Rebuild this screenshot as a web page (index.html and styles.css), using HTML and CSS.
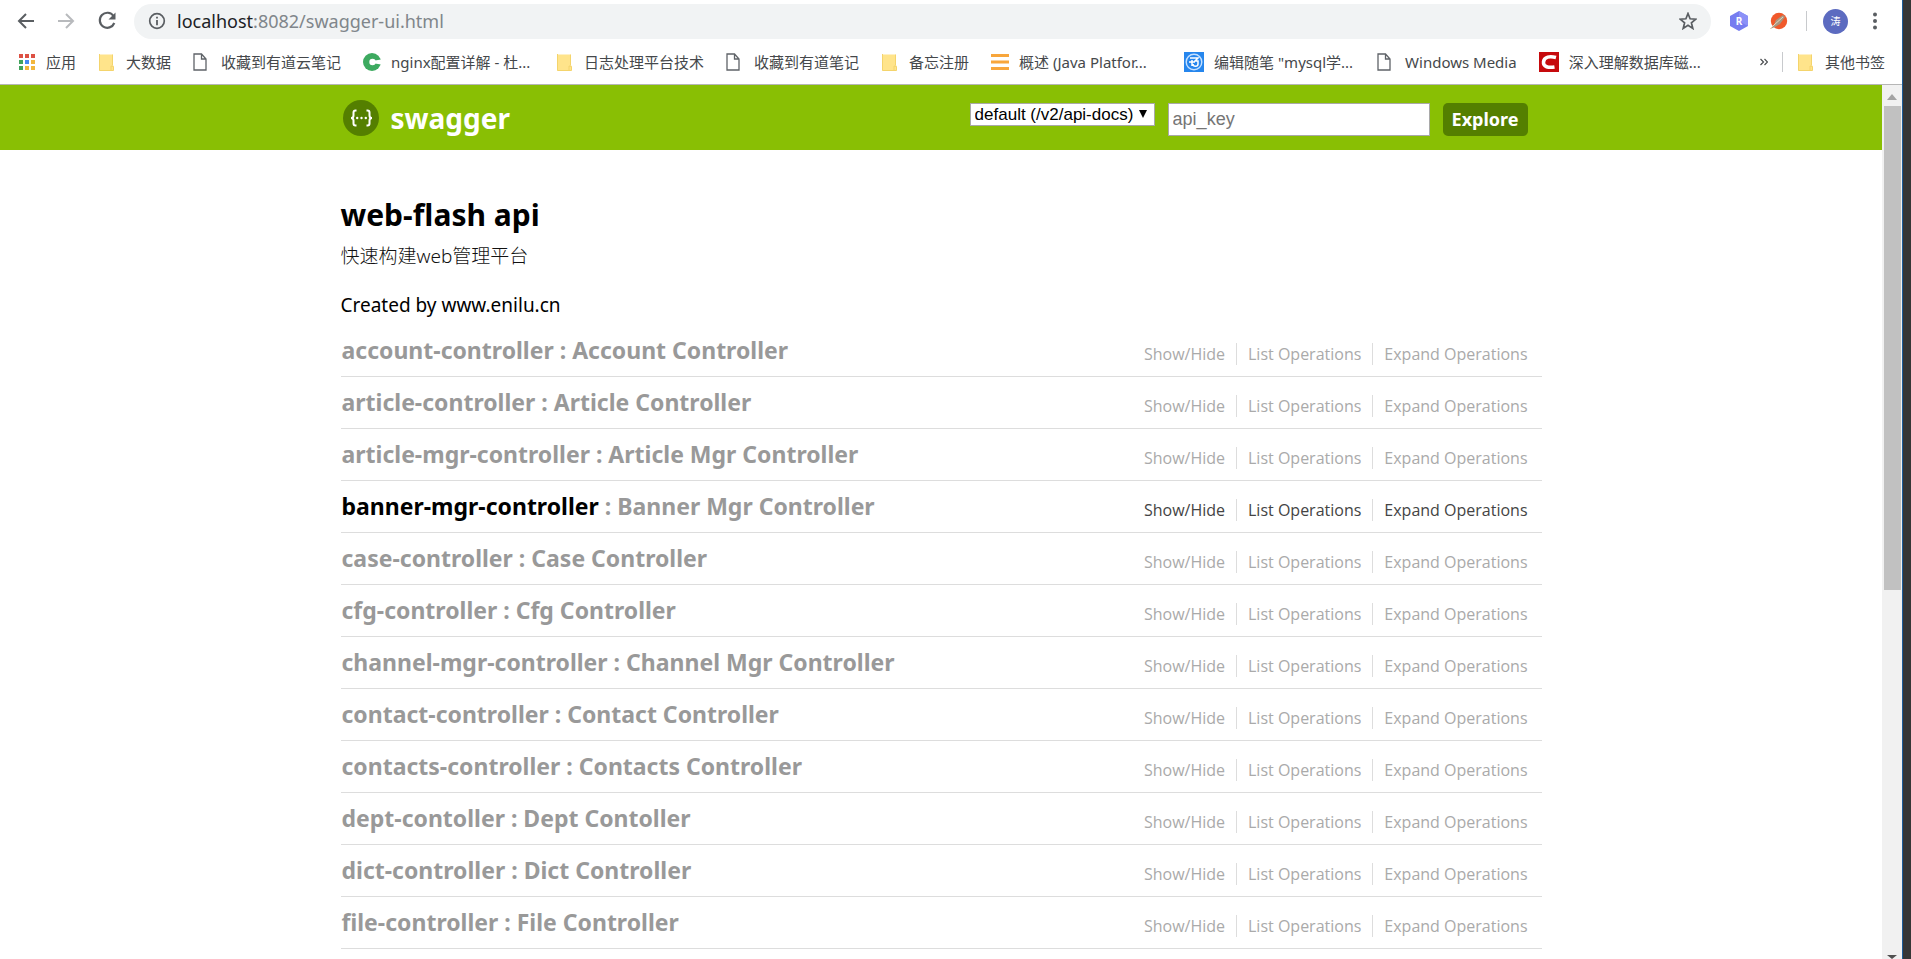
FILE: index.html
```
<!DOCTYPE html>
<html lang="zh-CN">
<head>
<meta charset="utf-8">
<title>Swagger UI</title>
<link rel="stylesheet" href="styles.css">
</head>
<body>
<svg class="defs" width="0" height="0" aria-hidden="true">
  <symbol id="folder" viewBox="0 0 18 18"><path d="M1 1.500h13.500v11h1v5H1z" fill="#ffe48b"/><path d="M1.500 1v16.500h12M14.500 1.500v11M13 13v4.500h2.500v-4z" fill="none" stroke="#f4d46c"/></symbol>
  <symbol id="page" viewBox="0 0 18 18"><path d="M1 1h7.500l4.500 5v11H1zM8.500 1v5H13" fill="#fff" stroke="#5f6368" stroke-width="1.300"/></symbol>
</svg>
<div class="screen">
<div class="browser">
  <div class="toolbar">
    <button class="tool" aria-label="后退"><svg width="18" height="18" viewBox="0 0 18 18"><path d="M17 9H2M9 2L2 9l7 7" fill="none" stroke="#5a5e62" stroke-width="2"/></svg></button>
    <button class="tool" aria-label="前进"><svg width="18" height="18" viewBox="0 0 18 18"><path d="M1 9h15M9 2l7 7-7 7" fill="none" stroke="#b8babd" stroke-width="2"/></svg></button>
    <button class="tool" aria-label="刷新"><svg width="20" height="20" viewBox="0 0 20 20"><path d="M16.500 5A7.500 7.500 0 1 0 17.300 12" fill="none" stroke="#5a5e62" stroke-width="2.200"/><path d="M18.500 1.500v7h-7z" fill="#5a5e62"/></svg></button>
    <div class="address">
      <svg width="18" height="18" viewBox="0 0 18 18"><circle cx="9" cy="9" r="7.300" fill="none" stroke="#5a5e62" stroke-width="1.700"/><path d="M9 4.700v1.900M9 8v5.200" stroke="#5a5e62" stroke-width="1.800"/></svg>
      <span class="url"><b>localhost</b>:8082/swagger-ui.html</span>
      <button class="tool star" aria-label="收藏"><svg width="18" height="18" viewBox="0 0 18 18"><path d="M9 1.500l2.100 5.300 5.700.4-4.400 3.600 1.400 5.600L9 13.300l-4.800 3.100 1.400-5.600L1.200 7.200l5.700-.4z" fill="none" stroke="#5a5e62" stroke-width="1.700"/></svg></button>
    </div>
    <div class="extensions">
      <button class="tool" aria-label="R"><svg width="20" height="20" viewBox="0 0 20 20"><path d="M10 0l9 5v10l-9 5-9-5V5z" fill="#767df0"/><path d="M10 0l9 5v10l-9-5z" fill="#8b91f7"/><text x="10" y="13.500" text-anchor="middle" class="ext-letter">R</text></svg></button>
      <button class="tool" aria-label="Postman"><svg width="20" height="20" viewBox="0 0 20 20"><circle cx="11" cy="10" r="8.200" fill="#f0592b"/><path d="M2 18l4-4 2-5 7-5 2 2-5 7-5 3z" fill="#a99680"/><path d="M6 14l9-8M2 18l5-5" stroke="#e7d5bc"/></svg></button>
      <span class="divider"></span>
      <button class="avatar">涛</button>
      <button class="tool menu" aria-label="菜单"><svg width="6" height="18" viewBox="0 0 6 18"><g fill="#5a5e62"><circle cx="3" cy="2.500" r="2"/><circle cx="3" cy="9" r="2"/><circle cx="3" cy="15.500" r="2"/></g></svg></button>
    </div>
  </div>
  <nav class="bookmarks">
    <a href="#"><svg width="18" height="18" viewBox="0 0 18 18"><path d="M1 1h4v4H1zM7 1h4v4H7zM13 1h4v4h-4z" fill="#dd5144"/><path d="M1 7h4v4H1z" fill="#42a35c"/><path d="M7 7h4v4H7z" fill="#4688f1"/><path d="M13 7h4v4h-4zM7 13h4v4H7zM13 13h4v4h-4z" fill="#f2b63c"/><path d="M1 13h4v4H1z" fill="#42a35c"/></svg>应用</a>
    <a href="#"><svg width="18" height="18"><use href="#folder"/></svg>大数据</a>
    <a href="#"><svg width="18" height="18"><use href="#page"/></svg>收藏到有道云笔记</a>
    <a href="#" class="clipped"><svg width="18" height="18" viewBox="0 0 18 18"><circle cx="9" cy="9" r="9" fill="#3daa60"/><circle cx="9.500" cy="9" r="3.200" fill="#fff"/><path d="M12 7.600l6-1v4.800l-6-1z" fill="#fff"/></svg>nginx配置详解 - 杜...</a>
    <a href="#"><svg width="18" height="18"><use href="#folder"/></svg>日志处理平台技术</a>
    <a href="#"><svg width="18" height="18"><use href="#page"/></svg>收藏到有道笔记</a>
    <a href="#"><svg width="18" height="18"><use href="#folder"/></svg>备忘注册</a>
    <a href="#" class="clipped"><svg width="18" height="18" viewBox="0 0 18 18"><path d="M0 1h18v3H0zM0 7.500h18v3H0zM0 14h18v3H0z" fill="#f8a63c"/></svg>概述 (Java Platfor...</a>
    <a href="#" class="clipped"><svg width="20" height="20" viewBox="0 0 20 20"><path d="M0 0h20v20H0z" fill="#2686ed"/><circle cx="10" cy="10" r="7.800" fill="none" stroke="#c6e1ff" stroke-width="1.400"/><path d="M6 6h8l-3 3h3v3c0 3-5 3-5 0M5 10h6M8 8v6" fill="none" stroke="#fff" stroke-width="1.500"/></svg>编辑随笔 "mysql学...</a>
    <a href="#"><svg width="18" height="18"><use href="#page"/></svg>Windows Media</a>
    <a href="#"><svg width="20" height="20" viewBox="0 0 20 20"><path d="M0 0h20v20H0z" fill="#c60a0d"/><path d="M17 5.500c-6-1.500-12-1-12.500 4.500-.5 5 5 6 11 5" fill="none" stroke="#fff" stroke-width="3.500"/></svg>深入理解数据库磁...</a>
    <div class="overflow">
      <button class="tool" aria-label="更多书签"><svg width="8" height="8" viewBox="0 0 8 8"><path d="M.5 1l3 3-3 3M4.500 1l3 3-3 3" fill="none" stroke="#4a4d50" stroke-width="1.200"/></svg></button>
      <span class="divider"></span>
      <a href="#"><svg width="18" height="18"><use href="#folder"/></svg>其他书签</a>
    </div>
  </nav>
  <div class="viewport">
    <div class="document">
      <header class="topbar">
        <div class="wrap">
          <a class="logo" href="#"><svg width="36" height="36" viewBox="0 0 36 36"><circle cx="18" cy="18" r="18" fill="#547f00"/><g fill="none" stroke="#fff" stroke-width="2"><path d="M13.500 10.500h-1q-2 0-2 2v3q0 2.500-2.500 2.500 2.500 0 2.500 2.500v3q0 2 2 2h1M23.500 10.500h1q2 0 2 2v3q0 2.500 2.500 2.500-2.500 0-2.500 2.500v3q0 2-2 2h-1"/></g><g fill="#fff"><circle cx="14.200" cy="18" r="1.200"/><circle cx="18.500" cy="18" r="1.200"/><circle cx="22.800" cy="18" r="1.200"/></g></svg>swagger</a>
          <form class="selector">
            <span class="picker"><select aria-label="API"><option>default (/v2/api-docs)</option></select><svg width="8" height="8" viewBox="0 0 8 8"><path d="M0 0h8L4 8z"/></svg></span>
            <input type="text" placeholder="api_key" aria-label="api_key">
            <button type="button">Explore</button>
          </form>
        </div>
      </header>
      <main class="content">
        <h1>web-flash api</h1>
        <p class="summary">快速构建web管理平台</p>
        <p class="author">Created by www.enilu.cn</p>
        <ul class="resources">
          <li><h2><a href="#">account-controller</a> : Account Controller</h2><div class="ops"><a href="#">Show/Hide</a><a href="#">List Operations</a><a href="#">Expand Operations</a></div></li>
          <li><h2><a href="#">article-controller</a> : Article Controller</h2><div class="ops"><a href="#">Show/Hide</a><a href="#">List Operations</a><a href="#">Expand Operations</a></div></li>
          <li><h2><a href="#">article-mgr-controller</a> : Article Mgr Controller</h2><div class="ops"><a href="#">Show/Hide</a><a href="#">List Operations</a><a href="#">Expand Operations</a></div></li>
          <li class="active"><h2><a href="#">banner-mgr-controller</a> : Banner Mgr Controller</h2><div class="ops"><a href="#">Show/Hide</a><a href="#">List Operations</a><a href="#">Expand Operations</a></div></li>
          <li><h2><a href="#">case-controller</a> : Case Controller</h2><div class="ops"><a href="#">Show/Hide</a><a href="#">List Operations</a><a href="#">Expand Operations</a></div></li>
          <li><h2><a href="#">cfg-controller</a> : Cfg Controller</h2><div class="ops"><a href="#">Show/Hide</a><a href="#">List Operations</a><a href="#">Expand Operations</a></div></li>
          <li><h2><a href="#">channel-mgr-controller</a> : Channel Mgr Controller</h2><div class="ops"><a href="#">Show/Hide</a><a href="#">List Operations</a><a href="#">Expand Operations</a></div></li>
          <li><h2><a href="#">contact-controller</a> : Contact Controller</h2><div class="ops"><a href="#">Show/Hide</a><a href="#">List Operations</a><a href="#">Expand Operations</a></div></li>
          <li><h2><a href="#">contacts-controller</a> : Contacts Controller</h2><div class="ops"><a href="#">Show/Hide</a><a href="#">List Operations</a><a href="#">Expand Operations</a></div></li>
          <li><h2><a href="#">dept-contoller</a> : Dept Contoller</h2><div class="ops"><a href="#">Show/Hide</a><a href="#">List Operations</a><a href="#">Expand Operations</a></div></li>
          <li><h2><a href="#">dict-controller</a> : Dict Controller</h2><div class="ops"><a href="#">Show/Hide</a><a href="#">List Operations</a><a href="#">Expand Operations</a></div></li>
          <li><h2><a href="#">file-controller</a> : File Controller</h2><div class="ops"><a href="#">Show/Hide</a><a href="#">List Operations</a><a href="#">Expand Operations</a></div></li>
        </ul>
      </main>
    </div>
    <div class="scrollbar">
      <svg width="10" height="6" viewBox="0 0 10 6"><path d="M0 6l5-6 5 6z" fill="#a3a3a3"/></svg>
      <div class="track"><div class="thumb"></div></div>
      <svg width="10" height="4" viewBox="0 0 10 4"><path d="M0 0h10L5 4z" fill="#505050"/></svg>
    </div>
  </div>
</div>
<div class="desktop"></div>
</div>
</body>
</html>
```
FILE: styles.css
```
* { box-sizing: border-box; }
body {
  margin: 0;
  background: #fff;
  font-family: "Noto Sans", "Noto Sans CJK SC", sans-serif;
  overflow: hidden;
}
a { color: inherit; text-decoration: none; }
h1, h2, p, ul { margin: 0; padding: 0; }
button { font-family: inherit; }
svg { flex: none; display: block; }
.defs { position: absolute; }

.screen { display: flex; min-height: 100vh; }
.browser { flex: 1; min-width: 0; display: flex; flex-direction: column; }
.desktop { width: 9px; background: #363636; border-left: 1px solid #1c5c99; }

.toolbar { display: flex; align-items: center; height: 42px; padding: 0 24px 0 17px; }
.tool { display: block; padding: 0; border: 0; background: none; }
.toolbar > .tool { margin-right: 22px; }
.address {
  flex: 1;
  display: flex;
  align-items: center;
  height: 35px;
  margin-left: -5px;
  padding: 0 14px;
  border-radius: 18px;
  background: #f1f3f4;
}
.url { flex: 1; margin-left: 11px; font-size: 18px; line-height: 24px; color: #80868b; }
.url b { font-weight: 400; color: #202124; }
.extensions { display: flex; align-items: center; gap: 16px; margin-left: 18px; }
.extensions .tool + .tool { margin-left: 3px; }
.extensions .tool + .divider { margin-left: 2px; }
.extensions .avatar + .menu { margin-left: 8px; }
.divider { width: 1px; height: 20px; background: #c8cacd; }
.ext-letter { font: 700 10px "Noto Sans", sans-serif; fill: #fff; }
.avatar {
  width: 25px;
  height: 25px;
  padding: 0;
  border: 0;
  border-radius: 50%;
  background: #5c6bc0;
  color: #fff;
  font-size: 10px;
  line-height: 25px;
}

.bookmarks {
  display: flex;
  align-items: center;
  gap: 22px;
  height: 43px;
  padding: 0 17px 3px 18px;
  border-bottom: 1px solid #b6b6b6;
  font-size: 15px;
  line-height: 20px;
  color: #45484b;
  white-space: nowrap;
}
.bookmarks a { display: flex; align-items: center; gap: 10px; }
.bookmarks .clipped { min-width: 171px; }
.overflow { display: flex; align-items: center; gap: 14px; margin-left: auto; }

.viewport { flex: 1; display: flex; }
.document { flex: 1; min-width: 0; }
.scrollbar {
  display: flex;
  flex-direction: column;
  align-items: center;
  width: 20px;
  padding-top: 9px;
  background: #f1f1f1;
}
.track { flex: 1; width: 17px; margin-top: 6px; }
.thumb { height: 57%; background: #c1c1c1; }

.topbar { background: #89bf04; }
.wrap, .content { width: 1201px; max-width: 100%; margin: 0 auto; }
.wrap { display: flex; justify-content: space-between; align-items: center; height: 65px; padding: 3px 14px 0 2px; }
.logo { display: flex; align-items: center; gap: 12px; padding-bottom: 2px; color: #fff; font-size: 28px; line-height: 36px; font-weight: 700; }
.selector { display: flex; align-items: flex-start; gap: 13px; }
.picker { display: grid; align-items: center; }
.picker > * { grid-area: 1 / 1; }
.picker svg { justify-self: end; margin-right: 8px; pointer-events: none; }
.selector select {
  appearance: none;
  width: 185px;
  height: 23px;
  padding: 0 4px;
  border: 1px solid #a9a9a9;
  border-radius: 0;
  background: #fff;
  color: #000;
  font: 17px/21px "Liberation Sans", sans-serif;
}
.selector input {
  width: 262px;
  height: 33px;
  padding: 0 4px;
  border: 1px solid #a9a9a9;
  background: #fff;
  font: 18px "Liberation Sans", sans-serif;
}
.selector input::placeholder { color: #757575; }
.selector button {
  height: 33px;
  padding: 0 9px;
  border: 0;
  border-radius: 5px;
  background: #547f00;
  color: #fff;
  font-size: 18px;
  line-height: 32px;
  font-weight: 700;
}

.content { padding-top: 44px; }
h1 { font-size: 30px; line-height: 42px; }
.summary { margin-top: 6px; font-size: 19px; line-height: 28px; font-weight: 300; color: #111; }
.author { margin-top: 21px; font-size: 19px; line-height: 28px; color: #000; }
.resources { list-style: none; margin-top: 6px; }
.resources li {
  display: flex;
  justify-content: space-between;
  height: 52px;
  padding: 10px 0 0 1px;
  border-bottom: 1px solid #ddd;
  color: #999;
}
h2 { font-size: 23px; line-height: 30px; }
.ops { display: flex; padding: 8px 3px 0 0; font-family: "Open Sans", sans-serif; font-size: 16px; line-height: 22px; color: #aaa; }
.ops a { height: 22px; padding: 0 11px; }
.ops a + a { border-left: 1px solid #ddd; }
.active h2 a { color: #000; }
.active .ops { color: #444; }
```
